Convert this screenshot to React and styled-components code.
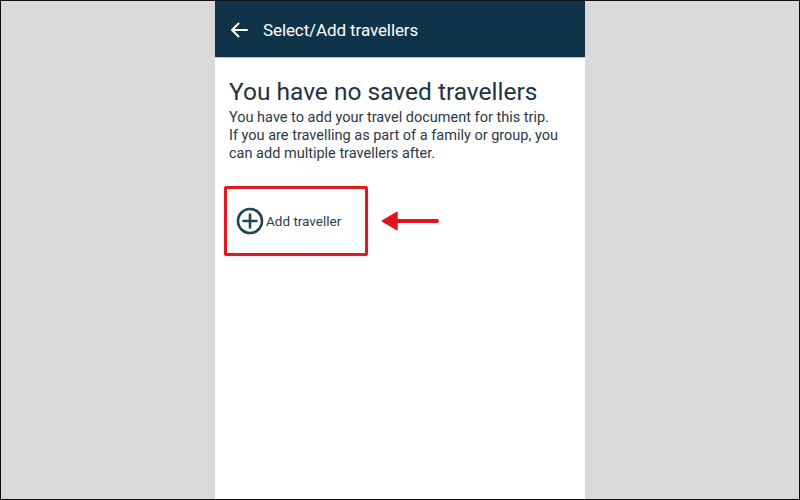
import styled, { createGlobalStyle } from 'styled-components'

const GlobalStyle = createGlobalStyle`
  html, body, #root {
    margin: 0;
    height: 100%;
  }
  * {
    box-sizing: border-box;
  }
  body {
    font-family: Roboto, "Liberation Sans", Arial, sans-serif;
  }
`

const Page = styled.div`
  height: 100%;
  border: 1px solid #111;
  background: #d9d9d9;
  display: flex;
  justify-content: center;
`

const Phone = styled.div`
  width: 370px;
  height: 100%;
  background: #ffffff;
  display: flex;
  flex-direction: column;
`

const Header = styled.div`
  height: 57px;
  background: #0f3349;
  border-bottom: 1px solid #b9c2cc;
  display: flex;
  align-items: center;
  padding: 2px 14px 0;
  gap: 14px;
  color: #ffffff;
`

const HeaderTitle = styled.div`
  font-size: 17px;
  letter-spacing: -0.1px;
`

const Content = styled.div`
  padding: 20px 14px 0;
  color: #243342;
`

const Title = styled.h1`
  margin: 0;
  font-size: 24.5px;
  font-weight: 400;
  line-height: 28px;
  letter-spacing: 0;
`

const Text = styled.p`
  margin: 3px 0 0;
  font-size: 14.5px;
  line-height: 18px;
  color: #2b3845;
  white-space: nowrap;
`

const ActionRow = styled.div`
  display: flex;
  align-items: center;
  gap: 13px;
  margin: 23px 0 0 -5px;
`

const Highlight = styled.div`
  width: 144px;
  height: 70px;
  border: 3px solid #dc1c22;
  border-radius: 2px;
  display: flex;
  align-items: center;
  padding: 0 0 0 9px;
  box-shadow: 0 0 1px rgba(220, 28, 34, 0.6);
`

const AddButton = styled.button`
  display: flex;
  align-items: center;
  gap: 2px;
  padding: 0;
  border: none;
  background: none;
  font-family: inherit;
  font-size: 13.5px;
  color: #2d3c4c;
  cursor: pointer;
`

const PlusIcon = () => (
  <svg width="28" height="28" viewBox="0 0 28 28">
    <circle cx="14" cy="14" r="12" fill="none" stroke="#1d4457" strokeWidth="2.6" />
    <path d="M14 7.5v13M7.5 14h13" stroke="#1d4457" strokeWidth="2.6" strokeLinecap="round" />
  </svg>
)

const BackArrow = () => (
  <svg width="20" height="20" viewBox="0 0 20 20">
    <path d="M18 10H3M9.5 3.5L3 10l6.5 6.5" fill="none" stroke="#fff" strokeWidth="2" strokeLinecap="round" strokeLinejoin="round" />
  </svg>
)

const PointerArrow = () => (
  <svg width="58" height="24" viewBox="0 0 58 24">
    <path d="M56 12H14" stroke="#e3141b" strokeWidth="4" strokeLinecap="round" />
    <path d="M1.5 12L16 3.5v17z" fill="#e3141b" stroke="#e3141b" strokeWidth="1.5" strokeLinejoin="round" />
  </svg>
)

const App = () => {
  return (
    <>
      <GlobalStyle />
      <Page>
        <Phone>
          <Header>
            <BackArrow />
            <HeaderTitle>Select/Add travellers</HeaderTitle>
          </Header>
          <Content>
            <Title>You have no saved travellers</Title>
            <Text>
              You have to add your travel document for this trip.
              <br />
              If you are travelling as part of a family or group, you
              <br />
              can add multiple travellers after.
            </Text>
            <ActionRow>
              <Highlight>
                <AddButton>
                  <PlusIcon />
                  Add traveller
                </AddButton>
              </Highlight>
              <PointerArrow />
            </ActionRow>
          </Content>
        </Phone>
      </Page>
    </>
  )
}

export default App
